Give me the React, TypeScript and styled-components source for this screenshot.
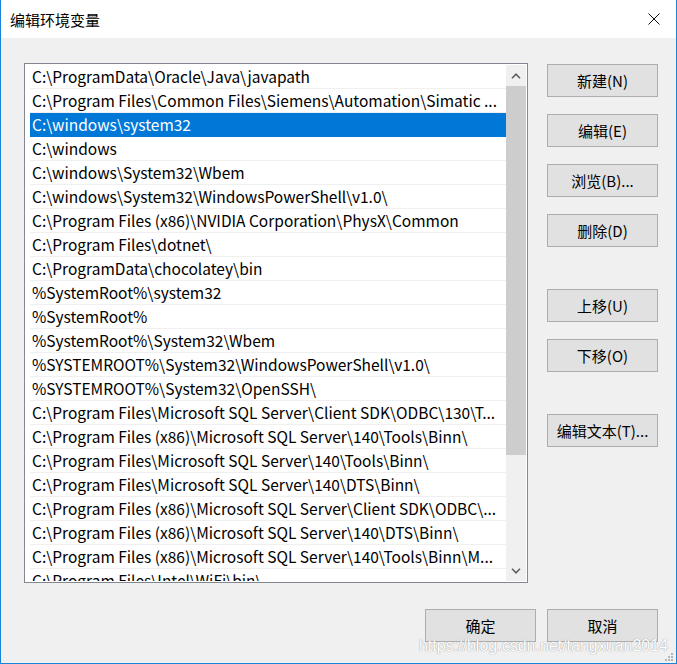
import React from "react";
import styled, { createGlobalStyle } from "styled-components";

const GlobalStyle = createGlobalStyle`
  html, body { margin: 0; padding: 0; background: #f0f0f0; }
  * { box-sizing: border-box; }
`;

const FONT = `"Noto Sans CJK SC", "Noto Sans", sans-serif`;

const Window = styled.div`
  position: relative;
  width: 677px;
  height: 664px;
  display: flex;
  flex-direction: column;
  border-left: 1px solid #1883d7;
  border-right: 1px solid #1883d7;
  border-bottom: 1px solid #1883d7;
  font-family: ${FONT};
  font-size: 15px;
  color: #000;
  overflow: hidden;
`;

const TitleBar = styled.div`
  height: 38px;
  flex: none;
  background: #fff;
  display: flex;
  align-items: center;
  justify-content: space-between;
  padding-left: 9px;
`;

const Title = styled.span`
  font-size: 15px;
  line-height: 1;
`;

const CloseBox = styled.div`
  width: 44px;
  height: 38px;
  display: flex;
  align-items: center;
  justify-content: center;
`;

const Body = styled.div`
  flex: 1;
  background: #f0f0f0;
  display: flex;
  flex-direction: column;
  padding: 25px 18px 0 23px;
`;

const Main = styled.div`
  display: flex;
  gap: 19px;
  align-items: flex-start;
`;

const ListBox = styled.div`
  width: 504px;
  height: 520px;
  border: 1px solid #828790;
  background: #fff;
  display: flex;
  padding: 1px 1px 1px 5px;
  overflow: hidden;
`;

const Rows = styled.div`
  width: 476px;
  flex: none;
  overflow: hidden;
  font-size: 15.5px;
`;

const Row = styled.div<{ $selected?: boolean }>`
  height: 24px;
  line-height: 23px;
  padding-left: 2px;
  white-space: nowrap;
  overflow: hidden;
  border-bottom: 1px solid ${(p) => (p.$selected ? "#0078d7" : "#f0f0f0")};
  background: ${(p) => (p.$selected ? "#0078d7" : "#fff")};
  color: ${(p) => (p.$selected ? "#fff" : "#000")};
`;

const ScrollBar = styled.div`
  width: 20px;
  flex: none;
  background: #f0f0f0;
  display: flex;
  flex-direction: column;
  height: 516px;
`;

const ArrowButton = styled.div`
  height: 21px;
  flex: none;
  display: flex;
  align-items: center;
  justify-content: center;
`;

const Track = styled.div`
  flex: 1;
  display: flex;
  flex-direction: column;
`;

const Thumb = styled.div<{ $h: number }>`
  height: ${(p) => p.$h}px;
  background: #cdcdcd;
  flex: none;
`;

const ButtonColumn = styled.div`
  display: flex;
  flex-direction: column;
  padding-top: 1px;
`;

const Btn = styled.div<{ $gapBefore?: number }>`
  width: 111px;
  height: 33px;
  margin-top: ${(p) => p.$gapBefore ?? 0}px;
  background: #e1e1e1;
  border: 1px solid #adadad;
  display: flex;
  align-items: center;
  justify-content: center;
  font-size: 15px;
  white-space: nowrap;
`;

const Footer = styled.div`
  display: flex;
  justify-content: flex-end;
  gap: 11px;
  margin-top: 26px;
`;

const Watermark = styled.div`
  position: absolute;
  right: 8px;
  bottom: 8px;
  font-family: "Liberation Sans", Arial, sans-serif;
  font-size: 16px;
  color: #ffffff;
  text-shadow: 0 0 1px #9a9a9a, 0 0 1px #b0b0b0;
  pointer-events: none;
`;

const Grip = styled.svg`
  position: absolute;
  right: 2px;
  bottom: 1px;
`;

const items = [
  "C:\\ProgramData\\Oracle\\Java\\javapath",
  "C:\\Program Files\\Common Files\\Siemens\\Automation\\Simatic ...",
  "C:\\windows\\system32",
  "C:\\windows",
  "C:\\windows\\System32\\Wbem",
  "C:\\windows\\System32\\WindowsPowerShell\\v1.0\\",
  "C:\\Program Files (x86)\\NVIDIA Corporation\\PhysX\\Common",
  "C:\\Program Files\\dotnet\\",
  "C:\\ProgramData\\chocolatey\\bin",
  "%SystemRoot%\\system32",
  "%SystemRoot%",
  "%SystemRoot%\\System32\\Wbem",
  "%SYSTEMROOT%\\System32\\WindowsPowerShell\\v1.0\\",
  "%SYSTEMROOT%\\System32\\OpenSSH\\",
  "C:\\Program Files\\Microsoft SQL Server\\Client SDK\\ODBC\\130\\T...",
  "C:\\Program Files (x86)\\Microsoft SQL Server\\140\\Tools\\Binn\\",
  "C:\\Program Files\\Microsoft SQL Server\\140\\Tools\\Binn\\",
  "C:\\Program Files\\Microsoft SQL Server\\140\\DTS\\Binn\\",
  "C:\\Program Files (x86)\\Microsoft SQL Server\\Client SDK\\ODBC\\...",
  "C:\\Program Files (x86)\\Microsoft SQL Server\\140\\DTS\\Binn\\",
  "C:\\Program Files (x86)\\Microsoft SQL Server\\140\\Tools\\Binn\\M...",
  "C:\\Program Files\\Intel\\WiFi\\bin\\",
];

const Chevron = ({ up }: { up?: boolean }) => (
  <svg width="10" height="6" viewBox="0 0 10 6">
    <path
      d={up ? "M1 5.2 L5 1.2 L9 5.2" : "M1 0.8 L5 4.8 L9 0.8"}
      fill="none"
      stroke="#606060"
      strokeWidth="1.6"
    />
  </svg>
);

export default function App() {
  return (
    <>
      <GlobalStyle />
      <Window>
        <TitleBar>
          <Title>编辑环境变量</Title>
          <CloseBox>
            <svg width="12" height="12" viewBox="0 0 12 12">
              <path d="M0.5 0.5 L11.5 11.5 M11.5 0.5 L0.5 11.5" stroke="#111" strokeWidth="1" />
            </svg>
          </CloseBox>
        </TitleBar>
        <Body>
          <Main>
            <ListBox>
              <Rows>
                {items.map((t, i) => (
                  <Row key={i} $selected={i === 2}>
                    {t}
                  </Row>
                ))}
              </Rows>
              <ScrollBar>
                <ArrowButton>
                  <Chevron up />
                </ArrowButton>
                <Track>
                  <Thumb $h={369} />
                </Track>
                <ArrowButton>
                  <Chevron />
                </ArrowButton>
              </ScrollBar>
            </ListBox>
            <ButtonColumn>
              <Btn>新建(N)</Btn>
              <Btn $gapBefore={17}>编辑(E)</Btn>
              <Btn $gapBefore={17}>浏览(B)...</Btn>
              <Btn $gapBefore={17}>删除(D)</Btn>
              <Btn $gapBefore={42}>上移(U)</Btn>
              <Btn $gapBefore={17}>下移(O)</Btn>
              <Btn $gapBefore={42}>编辑文本(T)...</Btn>
            </ButtonColumn>
          </Main>
          <Footer>
            <Btn>确定</Btn>
            <Btn>取消</Btn>
          </Footer>
        </Body>
        <Watermark>https://blog.csdn.net/tangxuan2014</Watermark>
        <Grip width="12" height="12" viewBox="0 0 12 12">
          {[
            [9, 1],
            [6, 4],
            [9, 4],
            [3, 7],
            [6, 7],
            [9, 7],
          ].map(([x, y], i) => (
            <rect key={i} x={x} y={y + 2} width="2" height="2" fill="#b4b4b4" />
          ))}
        </Grip>
      </Window>
    </>
  );
}
